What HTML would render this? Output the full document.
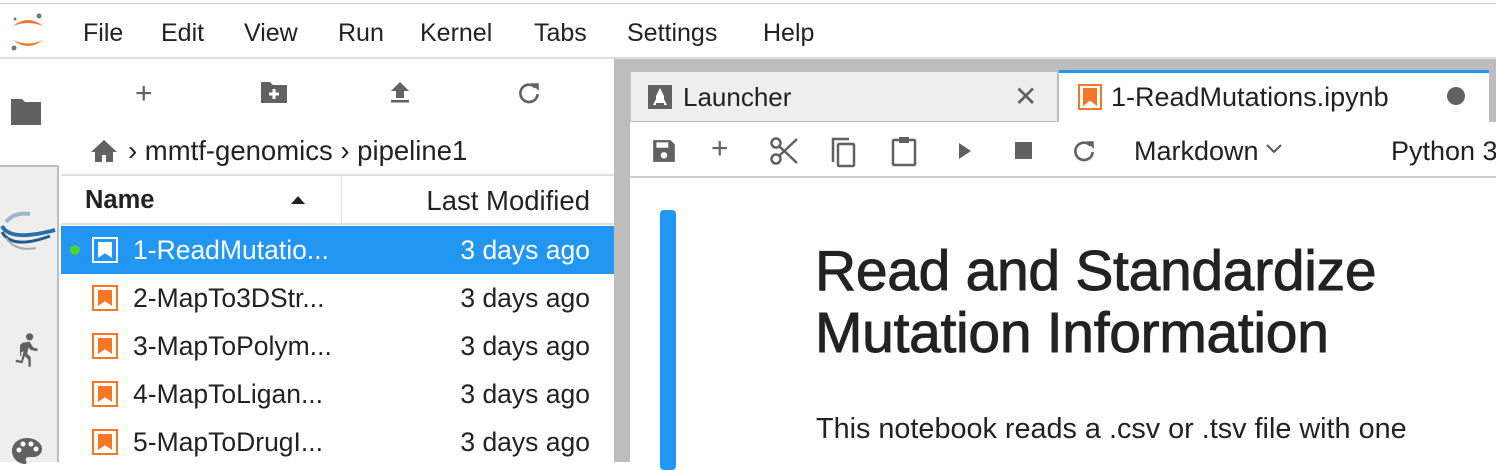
<!DOCTYPE html>
<html><head><meta charset="utf-8"><style>
*{margin:0;padding:0;box-sizing:border-box}
body{width:1496px;height:462px;overflow:hidden;background:#fff;font-family:"Liberation Sans",Arial,sans-serif;color:#222;position:relative}
.a{position:absolute;white-space:nowrap}
.menu{font-size:25px;top:19px;color:#222}
.row{position:absolute;left:61px;width:553px;height:48px;font-size:26.5px}
.row .n{position:absolute;left:72px;top:9px}
.row .d{position:absolute;right:24px;top:9px}
.row .ic{position:absolute;left:31px;top:11px;width:26px;height:26px;border:2px solid #f37726;background:#fff}
.row .ic:after{content:"";position:absolute;left:4px;top:3px;width:14px;height:16px;background:#f37726;clip-path:polygon(0 0,100% 0,100% 100%,50% 70%,0 100%)}
.tb{position:absolute;top:138px}
</style></head><body>
<div class="a" style="left:0;top:3px;width:1496px;height:1px;background:#ccc"></div>
<svg class="a" style="left:8px;top:10px" width="40" height="44" viewBox="0 0 40 44">
<path d="M5 16 Q20 4 35 16 Q20 10 5 16Z" fill="#f37726"/>
<path d="M5 30 Q20 42 35 30 Q20 37 5 30Z" fill="#f37726"/>
<circle cx="31" cy="6" r="2.5" fill="#767677"/><circle cx="6" cy="38" r="2.5" fill="#767677"/><circle cx="7" cy="9" r="1.5" fill="#767677"/>
</svg>
<div class="a menu" style="left:83px">File</div>
<div class="a menu" style="left:161px">Edit</div>
<div class="a menu" style="left:244px">View</div>
<div class="a menu" style="left:338px">Run</div>
<div class="a menu" style="left:420px">Kernel</div>
<div class="a menu" style="left:534px">Tabs</div>
<div class="a menu" style="left:627px">Settings</div>
<div class="a menu" style="left:763px">Help</div>
<div class="a" style="left:0;top:57px;width:1496px;height:2px;background:#ddd"></div>
<div class="a" style="left:0;top:165px;width:59px;height:297px;background:#eee;border-right:2px solid #bdbdbd;border-top:2px solid #bdbdbd"></div>
<svg class="a" style="left:9px;top:97px" width="34" height="30" viewBox="0 0 34 30"><path d="M2 2h11l3 3h16v23H2z" fill="#616161"/></svg>
<svg class="a" style="left:0;top:200px" width="58" height="60" viewBox="0 0 58 60"><path d="M6 22 Q14 12 30 14" stroke="#9cb8cc" stroke-width="4" fill="none"/><path d="M2 26 Q10 42 55 30" stroke="#2a6fa8" stroke-width="4" fill="none"/><path d="M2 32 Q12 50 50 36" stroke="#1f5c8f" stroke-width="3" fill="none"/><path d="M6 38 Q16 52 36 48" stroke="#aaa" stroke-width="2" fill="none"/></svg>
<svg class="a" style="left:11px;top:332px" width="30" height="36" viewBox="0 0 24 30"><circle cx="15" cy="4" r="3" fill="#616161"/><path d="M9 9l6-1 3 5 4 1-1 2-5-1-2-2-1 5 3 3v8h-2v-6l-3-3-2 6-6-1 1-2 4 1 2-8-2 1v3H7V11z" fill="#616161"/></svg>
<svg class="a" style="left:10px;top:436px" width="34" height="30" viewBox="0 0 34 30"><path d="M17 2C8 2 2 8 2 15s6 13 13 13c2 0 2-2 1-3-1-2 0-4 3-4h4c6 0 9-4 9-8C32 7 25 2 17 2z" fill="#616161"/><circle cx="9" cy="14" r="2.5" fill="#fff"/><circle cx="13" cy="8" r="2.5" fill="#fff"/><circle cx="21" cy="8" r="2.5" fill="#fff"/><circle cx="26" cy="13" r="2.5" fill="#fff"/></svg>
<div class="a" style="left:135px;top:77px;font-size:30px;color:#616161">+</div>
<svg class="a" style="left:260px;top:80px" width="28" height="24" viewBox="0 0 28 24"><path d="M1 2h9l3 3h14v18H1z" fill="#616161"/><path d="M14 9v10M9 14h10" stroke="#fff" stroke-width="3"/></svg>
<svg class="a" style="left:388px;top:80px" width="24" height="24" viewBox="0 0 24 24"><path d="M12 2l9 9h-5v7H8v-7H3z" fill="#616161"/><rect x="3" y="20" width="18" height="2.5" fill="#616161"/></svg>
<svg class="a" style="left:516px;top:80px" width="26" height="26" viewBox="0 0 24 24"><path d="M18 7A8 8 0 1 0 20 13" stroke="#616161" stroke-width="2.4" fill="none"/><path d="M14 3h7v7z" fill="#616161"/></svg>
<svg class="a" style="left:90px;top:139px" width="28" height="24" viewBox="0 0 28 24"><path d="M14 1L1 13h4v10h7v-7h4v7h7V13h4z" fill="#616161"/></svg>
<div class="a" style="left:128px;top:135px;font-size:27.5px;color:#222">› mmtf-genomics › pipeline1</div>
<div class="a" style="left:61px;top:174px;width:553px;height:2px;background:#e0e0e0"></div>
<div class="a" style="left:61px;top:223px;width:553px;height:2px;background:#e0e0e0"></div>
<div class="a" style="left:341px;top:176px;width:1px;height:48px;background:#e0e0e0"></div>
<div class="a" style="left:85px;top:186px;font-size:25.5px;font-weight:bold;color:#222">Name</div>
<div class="a" style="left:291px;top:196px;width:0;height:0;border-left:7px solid transparent;border-right:7px solid transparent;border-bottom:8px solid #222"></div>
<div class="a" style="right:906px;top:185px;font-size:27.5px;color:#222">Last Modified</div>
<div class="row" style="top:226px;background:#2196f3;color:#fff"><div class="a" style="left:9px;top:19px;width:10px;height:10px;border-radius:50%;background:#4cd137"></div><div class="a" style="left:31px;top:11px;width:26px;height:26px;border:2px solid #fff"><div class="a" style="left:4px;top:3px;width:14px;height:16px;background:#fff;clip-path:polygon(0 0,100% 0,100% 100%,50% 70%,0 100%)"></div></div><div class="n">1-ReadMutatio...</div><div class="d">3 days ago</div></div>
<div class="row" style="top:274px"><div class="ic"></div><div class="n">2-MapTo3DStr...</div><div class="d">3 days ago</div></div>
<div class="row" style="top:322px"><div class="ic"></div><div class="n">3-MapToPolym...</div><div class="d">3 days ago</div></div>
<div class="row" style="top:370px"><div class="ic"></div><div class="n">4-MapToLigan...</div><div class="d">3 days ago</div></div>
<div class="row" style="top:418px"><div class="ic"></div><div class="n">5-MapToDrugI...</div><div class="d">3 days ago</div></div>
<div class="a" style="left:614px;top:59px;width:16px;height:403px;background:#bdbdbd"></div>
<div class="a" style="left:630px;top:59px;width:866px;height:63px;background:#bdbdbd"></div>
<div class="a" style="left:631px;top:72px;width:426px;height:49px;background:#eee"></div>
<svg class="a" style="left:648px;top:85px" width="24" height="24" viewBox="0 0 24 24"><rect width="24" height="24" fill="#616161"/><path d="M12 3l4 8v7h-8v-7z" fill="#fff"/><path d="M8 14l-3 6h3zM16 14l3 6h-3z" fill="#fff"/></svg>
<div class="a" style="left:683px;top:82px;font-size:26px">Launcher</div>
<div class="a" style="left:1014px;top:80px;font-size:28px;color:#616161">✕</div>
<div class="a" style="left:1059px;top:70px;width:430px;height:52px;background:#fff;border-top:3px solid #2196f3"></div>
<div class="a" style="left:1078px;top:84px;width:24px;height:26px;border:2px solid #f37726"><div class="a" style="left:3px;top:2px;width:14px;height:18px;background:#f37726;clip-path:polygon(0 0,100% 0,100% 100%,50% 70%,0 100%)"></div></div>
<div class="a" style="left:1111px;top:82px;font-size:27px">1-ReadMutations.ipynb</div>
<div class="a" style="left:1447px;top:87px;width:18px;height:18px;border-radius:50%;background:#616161"></div>
<div class="a" style="left:630px;top:122px;width:866px;height:56px;background:#fff;border-bottom:2px solid #cfcfcf"></div>
<svg class="a tb" style="left:651px" width="26" height="26" viewBox="0 0 24 24"><path d="M2 2h16l4 4v16H2z" fill="#616161"/><rect x="5" y="4" width="11" height="5" fill="#fff"/><circle cx="12" cy="16" r="3" fill="#fff"/></svg>
<div class="a" style="left:711px;top:132px;font-size:30px;color:#616161">+</div>
<svg class="a" style="left:769px;top:136px" width="30" height="30" viewBox="0 0 30 30"><circle cx="7" cy="7" r="4.5" stroke="#616161" stroke-width="2.5" fill="none"/><circle cx="7" cy="23" r="4.5" stroke="#616161" stroke-width="2.5" fill="none"/><path d="M10 10L28 27M10 20L28 3" stroke="#616161" stroke-width="2.5"/></svg>
<svg class="a tb" style="left:830px;top:136px" width="28" height="32" viewBox="0 0 28 32"><path d="M3 26V3h16" stroke="#616161" stroke-width="2.5" fill="none"/><rect x="8" y="8" width="16" height="22" rx="1" stroke="#616161" stroke-width="2.5" fill="none"/></svg>
<svg class="a tb" style="left:890px;top:135px" width="28" height="32" viewBox="0 0 28 32"><rect x="3" y="5" width="22" height="25" rx="1" stroke="#616161" stroke-width="2.5" fill="none"/><rect x="9" y="2" width="10" height="6" fill="#616161"/></svg>
<svg class="a tb" style="left:955px;top:141px" width="20" height="20" viewBox="0 0 20 20"><path d="M4 2l12 8-12 8z" fill="#616161"/></svg>
<div class="a" style="left:1015px;top:142px;width:17px;height:17px;background:#616161"></div>
<svg class="a tb" style="left:1071px;top:138px" width="26" height="26" viewBox="0 0 24 24"><path d="M18 7A8 8 0 1 0 20 13" stroke="#616161" stroke-width="2.4" fill="none"/><path d="M14 3h7v7z" fill="#616161"/></svg>
<div class="a" style="left:1134px;top:136px;font-size:27px">Markdown</div>
<svg class="a" style="left:1265px;top:143px" width="18" height="12" viewBox="0 0 18 12"><path d="M2 2l7 7 7-7" stroke="#555" stroke-width="2" fill="none"/></svg>
<div class="a" style="left:1391px;top:136px;font-size:27px">Python 3</div>
<div class="a" style="left:660px;top:210px;width:16px;height:260px;background:#2196f3;border-radius:4px"></div>
<div class="a" style="left:815px;top:240px;font-size:57px;line-height:62px;-webkit-text-stroke:0.9px #222;color:#222;letter-spacing:-0.3px">Read and Standardize<br>Mutation Information</div>
<div class="a" style="left:816px;top:413px;font-size:28.8px;color:#222">This notebook reads a .csv or .tsv file with one</div>
</body></html>
